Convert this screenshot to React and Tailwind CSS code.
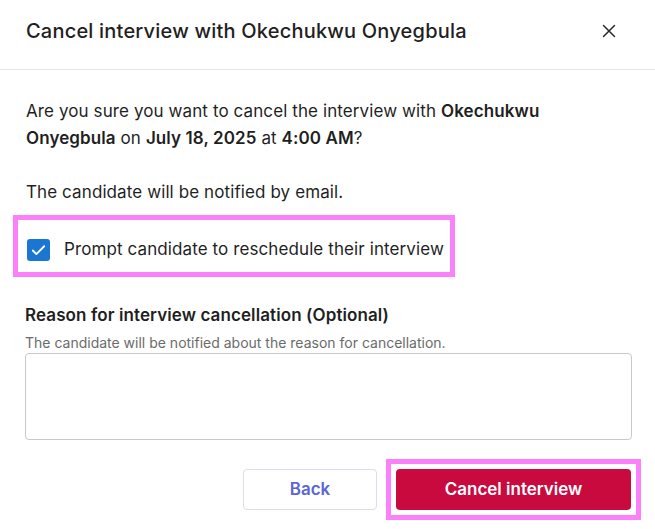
import { X, Check } from "lucide-react";

const font = { fontFamily: "Inter, 'Noto Sans', sans-serif" };

export default function App() {
  return (
    <div className="w-[655px] h-[529px] bg-white text-[#1f1f1f] overflow-hidden" style={font}>
      <header className="h-[70px] flex items-center justify-between pl-[26px] pr-[35px] border-b border-[#e3e3ea]">
        <h2 className="text-[20px] font-medium tracking-[0.2px] pb-[7px]">Cancel interview with Okechukwu Onyegbula</h2>
        <button className="pb-[7px] text-[#2a2a2a]">
          <X size={22} strokeWidth={1.6} />
        </button>
      </header>

      <div className="pl-[26px] pr-[50px] pt-[28px]">
        <p className="text-[17px] leading-[27px] tracking-[0.1px]">
          Are you sure you want to cancel the interview with <b className="font-semibold">Okechukwu Onyegbula</b> on{" "}
          <b className="font-semibold">July 18, 2025</b> at <b className="font-semibold">4:00 AM</b>?
        </p>
        <p className="text-[17px] leading-[27px] tracking-[0.1px] mt-[27px]">The candidate will be notified by email.</p>
      </div>

      <div className="ml-[13px] mt-[9px] w-[442px] h-[62px] border-[5px] border-[#fd80fb] flex items-center pl-[9px] pt-[8px] gap-[14px]">
        <span className="w-[23px] h-[22px] rounded-[3px] bg-[#1b76d2] flex items-center justify-center text-white">
          <Check size={17} strokeWidth={2.6} />
        </span>
        <span className="text-[17px] tracking-[0.1px]">Prompt candidate to reschedule their interview</span>
      </div>

      <div className="pl-[25px] pr-[23px] mt-[26px]">
        <label className="block text-[17px] font-semibold leading-[24px] tracking-[0.1px]">
          Reason for interview cancellation (Optional)
        </label>
        <p className="text-[14px] text-[#6b6b6b] leading-[18px] mt-[7px]">
          The candidate will be notified about the reason for cancellation.
        </p>
        <textarea className="mt-[1px] block w-full h-[87px] border border-[#c9c9c9] rounded-[4px] resize-none outline-none" />

        <div className="flex justify-end items-center mt-[19px]">
          <button className="w-[134px] h-[41px] rounded-[4px] border border-[#dcdcf2] text-[#5a66d6] text-[17px] font-semibold mr-[9px]">
            Back
          </button>
          <div className="border-[5px] border-[#fd80fb] p-[5px] -mr-[9px]">
            <button className="block w-[235px] h-[41px] rounded-[4px] bg-[#c90a3f] text-white text-[17px] font-semibold">
              Cancel interview
            </button>
          </div>
        </div>
      </div>
    </div>
  );
}
